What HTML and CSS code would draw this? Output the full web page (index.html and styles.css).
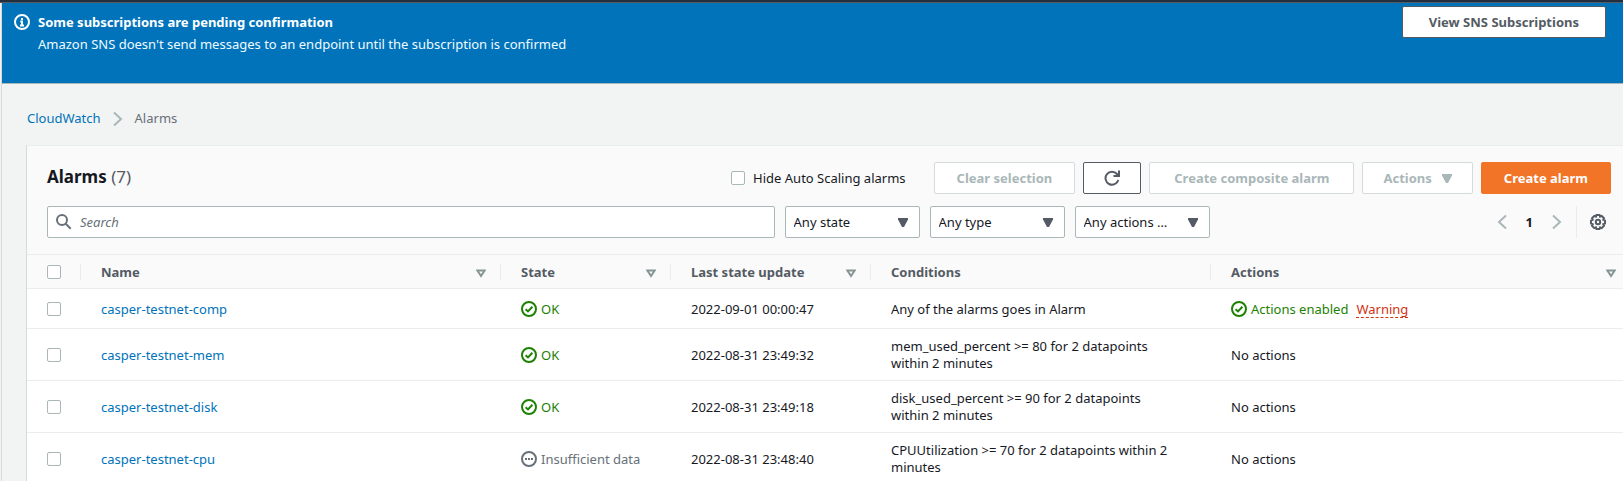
FILE: index.html
```html
<!DOCTYPE html>
<html lang="en">
<head>
<meta charset="utf-8">
<title>CloudWatch Alarms</title>
<link rel="stylesheet" href="styles.css">
</head>
<body>
<svg class="sprite" aria-hidden="true">
  <symbol id="i-ok" viewBox="0 0 16 16"><circle cx="8" cy="8" r="7"/><path d="M4.6 8.2 7 10.4l4.4-4.6"/></symbol>
  <symbol id="i-pending" viewBox="0 0 16 16"><circle cx="8" cy="8" r="7"/><path d="M4 8h2M7 8h2M10 8h2"/></symbol>
  <symbol id="i-filter" viewBox="0 0 10 9"><path d="M1.400 1.500h7.200L5 7z"/></symbol>
  <symbol id="i-caret" viewBox="0 0 10 9"><path d="M0 0h10v1.500L6 9H4L0 1.500z"/></symbol>
  <symbol id="i-next" viewBox="0 0 10 16"><path d="M1 1.500 8 8l-7 6.500"/></symbol>
  <symbol id="i-prev" viewBox="0 0 10 16"><path d="M9 1.500 2 8l7 6.500"/></symbol>
</svg>
<div class="topbar"></div>
<div class="shell">
  <section class="banner">
    <svg class="icon" viewBox="0 0 16 16"><circle cx="8" cy="8" r="7"/><path d="M8 4v2M6.300 7.500H8V11M6 11.500h4"/></svg>
    <div class="banner-text">
      <strong>Some subscriptions are pending confirmation</strong>
      <p>Amazon SNS doesn't send messages to an endpoint until the subscription is confirmed</p>
    </div>
    <button class="btn btn-banner" type="button">View SNS Subscriptions</button>
  </section>
  <main class="content">
    <nav class="crumbs" aria-label="Breadcrumb">
      <a href="#">CloudWatch</a>
      <svg class="chevron"><use href="#i-next"/></svg>
      <span>Alarms</span>
    </nav>
    <section class="card">
      <header class="card-head">
        <div class="row">
          <h1>Alarms <span>(7)</span></h1>
          <label class="hide"><input type="checkbox">Hide Auto Scaling alarms</label>
          <div class="buttons">
            <button class="btn" type="button" disabled>Clear selection</button>
            <button class="btn" type="button" aria-label="Refresh"><svg class="icon" viewBox="0 0 16 16"><path d="M14.300 10A6.500 6.500 0 1 1 13 4l1.500 1.500"/><path d="M15 .500V6H9.500"/></svg></button>
            <button class="btn btn-wide" type="button" disabled>Create composite alarm</button>
            <button class="btn btn-menu" type="button" disabled>Actions <svg class="caret"><use href="#i-caret"/></svg></button>
            <button class="btn btn-primary" type="button">Create alarm</button>
          </div>
        </div>
        <div class="row filters">
          <label class="search">
            <svg class="icon" viewBox="0 0 16 16"><circle cx="6" cy="6" r="5"/><path d="m9.700 9.700 5 5"/></svg>
            <input type="search" placeholder="Search" aria-label="Search">
          </label>
          <div class="select"><select aria-label="State"><option>Any state</option></select><svg class="caret"><use href="#i-caret"/></svg></div>
          <div class="select"><select aria-label="Type"><option>Any type</option></select><svg class="caret"><use href="#i-caret"/></svg></div>
          <div class="select"><select aria-label="Actions"><option>Any actions …</option></select><svg class="caret"><use href="#i-caret"/></svg></div>
          <div class="pager">
            <button type="button" aria-label="Previous page"><svg class="chevron"><use href="#i-prev"/></svg></button>
            <button type="button" class="page">1</button>
            <button type="button" aria-label="Next page"><svg class="chevron"><use href="#i-next"/></svg></button>
          </div>
          <button class="gear" type="button" aria-label="Preferences"><svg class="icon" viewBox="0 0 16 16"><path d="M6.500 1h3l.6 1.600 1.600-.7 2.300 2.300-.7 1.600 1.700.7v3l-1.700.7.7 1.600-2.300 2.300-1.600-.7-.6 1.600h-3l-.6-1.600-1.600.7L2 11.800l.7-1.600L1 9.500v-3l1.700-.7L2 4.200l2.300-2.300 1.600.7z"/><circle cx="8" cy="8" r="2.200"/></svg></button>
        </div>
      </header>
      <table>
        <colgroup><col class="c-check"><col class="c-name"><col class="c-state"><col class="c-date"><col class="c-cond"><col></colgroup>
        <thead>
          <tr>
            <th><input type="checkbox" aria-label="Select all"></th>
            <th><div class="th">Name<svg class="filter"><use href="#i-filter"/></svg></div></th>
            <th><div class="th">State<svg class="filter"><use href="#i-filter"/></svg></div></th>
            <th><div class="th">Last state update<svg class="filter"><use href="#i-filter"/></svg></div></th>
            <th><div class="th">Conditions</div></th>
            <th><div class="th">Actions<svg class="filter"><use href="#i-filter"/></svg></div></th>
          </tr>
        </thead>
        <tbody>
          <tr>
            <td><input type="checkbox" aria-label="Select casper-testnet-comp"></td>
            <td><a href="#">casper-testnet-comp</a></td>
            <td><span class="status ok"><svg class="icon"><use href="#i-ok"/></svg>OK</span></td>
            <td>2022-09-01 00:00:47</td>
            <td>Any of the alarms goes in Alarm</td>
            <td><div class="status"><span class="status ok"><svg class="icon"><use href="#i-ok"/></svg>Actions enabled</span><a class="warning" href="#">Warning</a></div></td>
          </tr>
          <tr>
            <td><input type="checkbox" aria-label="Select casper-testnet-mem"></td>
            <td><a href="#">casper-testnet-mem</a></td>
            <td><span class="status ok"><svg class="icon"><use href="#i-ok"/></svg>OK</span></td>
            <td>2022-08-31 23:49:32</td>
            <td>mem_used_percent &gt;= 80 for 2 datapoints within 2 minutes</td>
            <td>No actions</td>
          </tr>
          <tr>
            <td><input type="checkbox" aria-label="Select casper-testnet-disk"></td>
            <td><a href="#">casper-testnet-disk</a></td>
            <td><span class="status ok"><svg class="icon"><use href="#i-ok"/></svg>OK</span></td>
            <td>2022-08-31 23:49:18</td>
            <td>disk_used_percent &gt;= 90 for 2 datapoints within 2 minutes</td>
            <td>No actions</td>
          </tr>
          <tr>
            <td><input type="checkbox" aria-label="Select casper-testnet-cpu"></td>
            <td><a href="#">casper-testnet-cpu</a></td>
            <td><span class="status pending"><svg class="icon"><use href="#i-pending"/></svg>Insufficient data</span></td>
            <td>2022-08-31 23:48:40</td>
            <td>CPUUtilization &gt;= 70 for 2 datapoints within 2 minutes</td>
            <td>No actions</td>
          </tr>
        </tbody>
      </table>
    </section>
  </main>
</div>
</body>
</html>
```
FILE: styles.css
```css
* { box-sizing: border-box; }
body { margin: 0; background: #f2f3f3; color: #16191f; font: 13px/17px "Noto Sans", sans-serif; }
button, input, select { font: inherit; color: inherit; margin: 0; }
a { color: #0073bb; text-decoration: none; }
.sprite { position: absolute; width: 0; height: 0; }
.icon, .chevron, .filter { fill: none; stroke: currentColor; stroke-width: 2; flex: none; }
.icon { width: 16px; height: 16px; }
.chevron { width: 10px; height: 16px; color: #aab7b8; }
.caret { width: 10px; height: 9px; fill: currentColor; flex: none; }
.filter { width: 10px; height: 9px; margin-top: 2px; color: #879596; }

.topbar { height: 3px; background: #232f3e; border-bottom: 1px solid #545b64; }
.shell { margin-left: 1px; border-left: 1px solid #d5dbdb; }
.banner { display: flex; align-items: flex-start; gap: 8px; min-height: 81px; padding: 3px 17px 0 12px; background: #0073bb; color: #fff; border-bottom: 1px solid #aab7b8; }
.banner > .icon { margin-top: 8px; }
.banner-text { flex: 1; padding-top: 8px; display: grid; gap: 5px; }
.banner-text p { margin: 0; color: #f1faff; }

.btn { display: inline-flex; align-items: center; justify-content: center; gap: 10px; height: 32px; padding: 0 22px; background: #fff; border: 1px solid #545b64; border-radius: 2px; color: #545b64; font-weight: 700; white-space: nowrap; }
.btn:disabled { border-color: #d5dbdb; color: #aab7b8; }
.btn-wide { padding: 0 24px; }
.btn-banner { padding: 0 26px; }
.btn:has(.icon), .btn-menu { padding: 0 20px; }
.btn-primary { background: #f27427; border-color: #f27427; color: #fff; }

.content { padding: 26px 0 0 24px; }
.crumbs { display: flex; align-items: center; gap: 12px; padding-left: 1px; color: #687078; }
.card { margin-top: 18px; background: #fff; border: solid #d5dbdb; border-width: 1px 0 0 1px; border-top-color: #eaeded; }
.card-head { padding: 16px 12px 16px 20px; background: #fafafa; }
.row { display: flex; align-items: center; }
h1 { flex: 1; margin: 0; padding-bottom: 2px; font-size: 17px; line-height: 24px; }
h1 span { font-weight: 400; color: #545b64; }
.hide { display: flex; align-items: center; gap: 8px; margin-right: 28px; }
.buttons { display: flex; gap: 8px; }
input[type="checkbox"] { appearance: none; display: block; width: 14px; height: 14px; background: #fff; border: 1px solid #aab7b8; border-radius: 2px; }

.filters { gap: 10px; margin-top: 12px; }
.search { flex: 1; display: flex; align-items: center; gap: 8px; height: 32px; padding: 0 8px; background: #fff; border: 1px solid #aab7b8; border-radius: 2px; color: #687078; }
.search input { flex: 1; min-width: 0; border: 0; padding: 0; outline: 0; background: none; }
.search input::placeholder { color: #687078; font-style: italic; opacity: 1; }
.select { display: grid; align-items: center; width: 135px; }
.select > * { grid-area: 1 / 1; }
.select select { appearance: none; width: 100%; height: 32px; padding: 0 28px 0 8px; background: #fff; border: 1px solid #aab7b8; border-radius: 2px; }
.select .caret { justify-self: end; margin-right: 12px; color: #545b64; pointer-events: none; }
.pager { display: flex; align-items: center; gap: 19px; margin-left: 277px; }
.pager button, .gear { display: flex; padding: 0; border: 0; background: none; }
.pager .page { font-weight: 700; }
.gear { align-items: center; height: 32px; margin-left: 4px; padding: 0 5px 0 13px; border-left: 1px solid #eaeded; color: #545b64; }

table { width: 100%; table-layout: fixed; border-collapse: collapse; }
.c-check { width: 53px; }
.c-name { width: 420px; }
.c-state { width: 170px; }
.c-date { width: 200px; }
.c-cond { width: 340px; }
th { height: 34px; padding: 0; background: #fafafa; border: solid #eaeded; border-width: 1px 0; color: #545b64; text-align: left; }
.th { display: flex; align-items: center; justify-content: space-between; height: 16px; padding: 2px 14px 0 20px; border-left: 1px solid #eaeded; }
th:last-child .th { padding-right: 7px; }
td { height: 40px; padding: 9px 20px 8px 21px; border-bottom: 1px solid #eaeded; }
td:nth-child(5) { padding-right: 36px; }
th:first-child, td:first-child { padding-left: 20px; padding-right: 0; }
.status { display: flex; align-items: center; gap: 4px; }
.ok { color: #1d8102; }
.pending { color: #687078; }
.warning { margin-left: 4px; border-bottom: 1px dashed #d13212; color: #d13212; line-height: 16px; }
```
